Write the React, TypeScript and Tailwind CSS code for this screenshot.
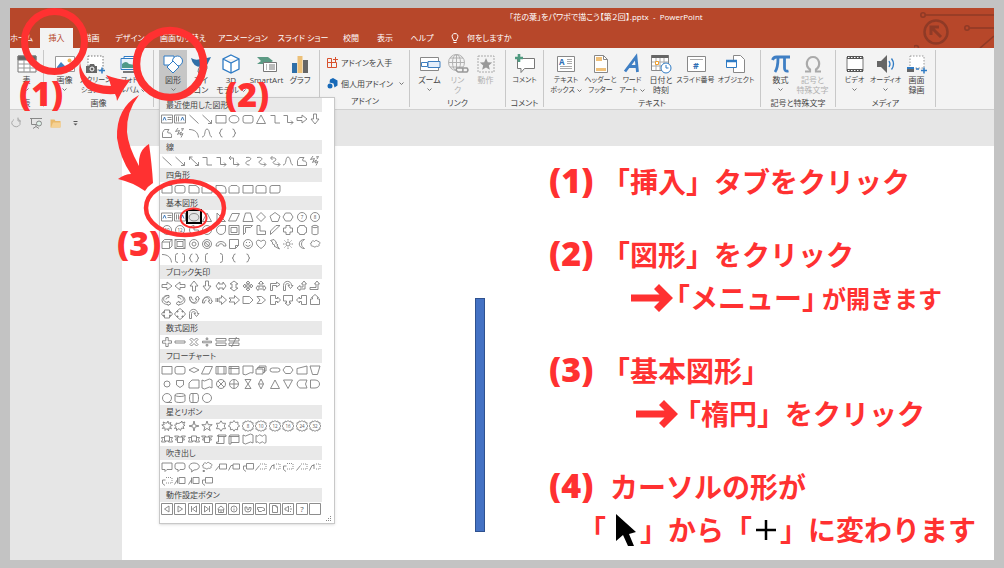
import type { ReactNode } from "react";
import clsx from "clsx";

type Glyph = { d: string; t?: string; blue?: string };

const BOX = "M1 2.5h10v7.5h-10z";
const ROUND = "M3 2.5h6q2 0 2 2v3.500q0 2-2 2h-6q-2 0-2-2v-3.500q0-2 2-2z";
const CIRCLE = "M6 1.500a4.500 4.500 0 1 1 0 9a4.500 4.500 0 1 1 0-9z";
const GEAR =
  "M6 .5l1.200 1.300 1.600-.8.5 1.700 1.800.1-.3 1.700 1.200 1.500-1.200 1.500.3 1.700-1.800.1-.5 1.700-1.600-.8-1.200 1.300-1.200-1.300-1.600.8-.5-1.700-1.800-.1.3-1.700-1.200-1.500 1.200-1.500-.3-1.700 1.800-.1.5-1.700 1.600.8z";
const FRAME = "M.5 .5h11v11h-11z";

const glyphs: Record<string, Glyph> = {
  textH: { d: "M.5 2h11v8h-11zM6.500 4.500h4M6.500 6.500h4", blue: "M2 7.500l1.500-3.500 1.500 3.500" },
  textV: { d: "M.5 2h11v8h-11zM2.500 3.500v5M4.500 3.500v5", blue: "M7 7.500l1.500-3.500 1.500 3.500" },
  line: { d: "M1.500 2l9 8.500" },
  arrowLine: { d: "M1.500 2l9 8.500M10.500 7v3.500h-3.500" },
  doubleLine: { d: "M1.500 2l9 8.500M10.500 7v3.500h-3.500M1.500 5v-3h3" },
  rect: { d: BOX },
  oval: { d: "M6 2.500c6.500 0 6.500 7.500 0 7.500s-6.500-7.500 0-7.500z" },
  round: { d: ROUND },
  tri: { d: "M6 2l4.500 8.500h-9z" },
  elbow: { d: "M1.500 2.500h4.500v7.500h5" },
  elbowArrow: { d: "M1.500 2.500h4v7h5.500M9 7.500l2 2-2 2" },
  elbowDouble: { d: "M1.500 3h4v6.500h5.500M9 7.500l2 2-2 2M3 1l-2 2 2 2" },
  curve: { d: "M4 2.500c7-1 5 3 2 3.500s-3 4 1.500 4" },
  curveArrow: { d: "M2 2.500c7-1 5 3 3 3.500s-1 4 5.500 3.500M9 7.500l2 2-2 2" },
  curveDouble: { d: "M2 3c7-1 5 3 3 3.500s-1 3.500 5.500 3M9 7.500l2 2-2 2M3.500 1l-2 2 2 2" },
  arrowR: { d: "M1 4.500h5v-2.500l5 4-5 4v-2.500h-5z" },
  arrowL: { d: "M11 4.500h-5v-2.500l-5 4 5 4v-2.500h5z" },
  arrowU: { d: "M4.500 11v-5h-2.500l4-5 4 5h-2.500v5z" },
  arrowD: { d: "M4.500 1v5h-2.500l4 5 4-5h-2.500v-5z" },
  free: { d: "M1.500 10.500v-5l2-3h4.500q-3 3.500 0 3.500 3-.5 2.500 4.500z" },
  scribble: { d: "M4 1l-2.500 3.500 4-1-2 4 4-2.500-1.500 3 3-1.500-2 4M7 2l2.500-.5-1.500 2.500" },
  arc: { d: "M1 2.500c6 0 9 3 9.500 8" },
  wave: { d: "M1 10c4 0 2-8 5-8s2 8 5 8" },
  braceL: { d: "M7.500 2q-2 0-2 2t-1.500 2q1.500 0 1.500 2t2 2" },
  braceR: { d: "M4.500 2q2 0 2 2t1.500 2q-1.500 0-1.500 2t-2 2" },
  braces: { d: "M4.500 2q-2 0-2 2t-1.500 2q1.500 0 1.500 2t2 2M7.500 2q2 0 2 2t1.500 2q-1.500 0-1.500 2t-2 2" },
  brackets: { d: "M4 1.500q-2.500 0-2.500 2v5q0 2 2.500 2M8 1.500q2.500 0 2.500 2v5q0 2-2.500 2" },
  brackL: { d: "M7 1.500q-2.500 0-2.500 2v5q0 2 2.500 2" },
  brackR: { d: "M5 1.500q2.500 0 2.500 2v5q0 2-2.500 2" },
  snip: { d: "M1 2.500h7l3 2.500v5h-10z" },
  snip2: { d: "M3 2.500h6l2 2v5.500h-10v-5.500z" },
  roundOne: { d: "M1 2.500h6q4 0 4 4v3.500h-10z" },
  roundTop: { d: "M3 2.500h6q2 0 2 2v5.500h-10v-5.500q0-2 2-2z" },
  roundD: { d: "M3 2.500h8v5.500q0 2-2 2h-8v-5.500q0-2 2-2z" },
  rightTri: { d: "M2 2v8.500h8.500z" },
  para: { d: "M4 2.500h7.500l-3.500 7.500h-7.500z" },
  trap: { d: "M3.500 2h5l2.500 8.500h-10z" },
  diamond: { d: "M6 1.500l4.500 4.500-4.500 4.500-4.500-4.500z" },
  penta: { d: "M6 1.500l5 3.700-2 5.300h-6l-2-5.300z" },
  hexa: { d: "M3.500 2h5l2.500 4-2.500 4h-5l-2.500-4z" },
  circ: { d: CIRCLE },
  c7: { d: CIRCLE, t: "7" },
  c8: { d: CIRCLE, t: "8" },
  c10: { d: CIRCLE, t: "10" },
  c12: { d: CIRCLE, t: "12" },
  pie: { d: "M6 1.500v4.500h4.500a4.500 4.500 0 1 1-4.500-4.500z" },
  tear: { d: "M6 1.500h4.500v4.500a4.500 4.500 0 1 1-4.500-4.500z" },
  frame: { d: "M1 1.500h10v9h-10zM3 3.500h6v5h-6z" },
  halfFrame: { d: "M1.500 1.500h9l-2 2h-5v5l-2 2z" },
  ell: { d: "M2 1.500h3v5.500h5.500v3.500h-8.500z" },
  stripe: { d: "M1.500 7l5.500-5.500h4l-9.500 9z" },
  cross: { d: "M4 1.500h4v2.500h2.500v4h-2.500v2.500h-4v-2.500h-2.500v-4h2.500z" },
  plus: { d: "M4.800 1.500h2.400v3.300h3.300v2.400h-3.300v3.300h-2.400v-3.300h-3.300v-2.400h3.300z" },
  plaque: { d: "M3.500 1.500h5q0 2 2 2v5q-2 0-2 2h-5q0-2-2-2v-5q2 0 2-2z" },
  can: { d: "M3 2.500c0-1.500 6-1.500 6 0v7c0 1.500-6 1.500-6 0zM3 2.500c0 1.500 6 1.500 6 0" },
  cube: { d: "M1 4l2.500-2.500h7.500v6.500l-2.500 2.500h-7.500zM1 4h7.500v6.500M8.500 4l2.500-2.500" },
  bevel: { d: "M1 1.500h10v9h-10zM3 3.500h6v5h-6zM1 1.500l2 2M11 1.500l-2 2M1 10.500l2-2M11 10.500l-2-2" },
  donut: { d: CIRCLE + "M6 4a2 2 0 1 1 0 4a2 2 0 1 1 0-4z" },
  no: { d: CIRCLE + "M6 3.500a2.500 2.500 0 1 1 0 5a2.500 2.500 0 1 1 0-5zM3.500 4l5 4.500" },
  blockArc: { d: "M1 8c0-6 10-6 10 0h-2.500c0-3-5-3-5 0z" },
  fold: { d: "M1.500 1.500h9v6l-3 3h-6zM10.500 7.500h-3v3" },
  smile: { d: CIRCLE + "M3.500 7q2.500 3 5 0M4.500 4v1M7.500 4v1" },
  heart: { d: "M6 10.500c-8-5-4-11 0-7 4-4 8 2 0 7z" },
  bolt: { d: "M1.500 2.500l3.500-1 2.500 3-1 .5 2.500 2-1 .5 2.500 3.500-5.500-3 1-.7-3-1.800 1-.7z" },
  sun: { d: "M6 4a2 2 0 1 1 0 4a2 2 0 1 1 0-4zM6 1v1.500M6 9.500v1.500M1 6h1.500M9.500 6h1.500M2.500 2.500l1 1M8.500 8.500l1 1M9.500 2.500l-1 1M3.500 8.500l-1 1" },
  moon: { d: "M8.500 1.500c-7 0-7 9 0 9c-4-2-4-7 0-9z" },
  cloud: { d: "M2.500 5c-.5-2 2-2.800 3-1.500.8-1.600 3-1.400 3.300 0 2.200-.3 2.700 2 1.200 2.700.8 1.800-1.300 2.800-2.500 1.800-.8 1.500-2.800 1.300-3.300 0-1.500.6-2.700-.6-2-1.500-1.200-.3-1-1.500.3-1.500z" },
  leftRight: { d: "M1 6l3-4v2h4v-2l3 4-3 4v-2h-4v2z" },
  upDown: { d: "M6 1l4 3h-2v4h2l-4 3-4-3h2v-4h-2z" },
  quad: { d: "M6 1l2 2h-1.300v2.300h2.300v-1.300l2 2-2 2v-1.300h-2.300v2.300h1.300l-2 2-2-2h1.300v-2.300h-2.300v1.300l-2-2 2-2v1.300h2.300v-2.300h-1.300z" },
  triple: { d: "M6 1l2.500 2.500h-1.500v3.500h2v-1.500l2 2.500-2 2.500v-1.500h-6v1.500l-2-2.500 2-2.500v1.500h2v-3.500h-1.500z" },
  bent: { d: "M1.500 10.500v-7h6v-1.500l3.500 2.500-3.500 2.500v-1.500h-4v5z" },
  uturn: { d: "M1.500 10.500v-5c0-5.500 8-5.500 8 0h1.500l-2.500 3-2.500-3h1.500c0-2.500-4-2.500-4 0v5z" },
  bentUp: { d: "M1 8l3-2.500v1.500h3v-3h-1.500l2.500-3 2.500 3h-1.500v5h-5v1.500z" },
  bentUp2: { d: "M1 7.500h6v-3.500h-1.500l2.500-3 2.500 3h-1.500v5.500h-8z" },
  curvR: { d: "M8 1.500c-7 0-7 7-1 7v-1.500l3 2.500-3 2v-1c-9 0-7-10 1-9zM8 1.500v2c-2 0-3 1-3 2" },
  curvL: { d: "M4 1.500c7 0 7 7 1 7v-1.500l-3 2.500 3 2v-1c9 0 7-10-1-9zM4 1.500v2c2 0 3 1 3 2" },
  curvU: { d: "M1.500 3c0 7 7 7 7 2h-1.500l2.500-3 2 3h-1c0 6-9 6-9-2zM1.500 3h2c0 2 1 3 2 3" },
  curvD: { d: "M1.500 9c0-7 7-7 7-2h-1.500l2.500 3 2-3h-1c0-6-9-6-9 2zM1.500 9h2c0-2 1-3 2-3" },
  striped: { d: "M1 4v4M2.500 4v4M4 4h2.500v-2.500l5 4.500-5 4.500v-2.500h-2.500z" },
  notched: { d: "M1 4h5.500v-2.500l5 4.500-5 4.500v-2.500h-5.500l2-2z" },
  home: { d: "M1 2.500h6.500l3.500 3.500-3.500 3.500h-6.500z" },
  chevron: { d: "M2 2.500h4.500l4 3.500-4 3.500h-4.500l3-3.500z" },
  callR: { d: "M1.500 1.500h5v3h2v-1.500l3 3-3 3v-1.500h-2v3h-5z" },
  callD: { d: "M1.500 1.500h9v5.500h-3v2h1.500l-3 2.500-3-2.500h1.500v-2h-3z" },
  callL: { d: "M10.500 1.500h-5v3h-2v-1.500l-3 3 3 3v-1.500h2v3h5z" },
  callU: { d: "M1.500 10.500h9v-5.500h-2v-1.500h1l-3.500-3-3.500 3h1v1.500h-2z" },
  callLR: { d: "M3.500 2h5v3h1v-1.500l2 2.500-2 2.500v-1.500h-1v3h-5v-3h-1v1.500l-2-2.500 2-2.500v1.500h1z" },
  callQ: { d: "M4 4v-1h-1l3-2.500 3 2.500h-1v1h1v-1l2.500 3-2.500 3v-1h-1v1h1l-3 2.500-3-2.500h1v-1h-1v1l-2.500-3 2.500-3v1z" },
  minus: { d: "M1 5h10v2h-10z" },
  times: { d: "M3.500 2l2.500 2.500 2.500-2.500 1.500 1.500-2.500 2.500 2.500 2.500-1.500 1.500-2.500-2.500-2.500 2.500-1.500-1.500 2.500-2.500-2.500-2.500z" },
  div: { d: "M1.500 5.200h9v1.600h-9zM5.200 2h1.600v1.600h-1.600zM5.200 8.400h1.600v1.600h-1.600z" },
  eq: { d: "M1 2.500h10v2.500h-10zM1 7h10v2.500h-10z" },
  neq: { d: "M1 2.500h10v2.500h-10zM1 7h10v2.500h-10zM8.500 1l-5 10" },
  flatDia: { d: "M6 3.500l5 2.500-5 2.500-5-2.500z" },
  predef: { d: BOX + "M3 2.500v7.500M9 2.500v7.500" },
  internal: { d: BOX + "M3 2.500v7.500M1 4.500h10" },
  doc: { d: "M1 2h10v7q-3-1-5 .8t-5 .4z" },
  docs: { d: "M1 5h7v5h-7zM2.500 5v-1.500h7v5h-1.500M4 3.500v-1.500h7v5h-1.500" },
  term: { d: "M3.500 4h5q2.500 0 2.500 2t-2.500 2h-5q-2.500 0-2.500-2t2.500-2z" },
  prep: { d: "M3.500 2.500h5l2.500 3.500-2.500 3.500h-5l-2.500-3.500z" },
  manual: { d: "M1 4.500l10-2.500v8h-10z" },
  manOp: { d: "M1 2h10l-2.500 8.500h-5z" },
  dot: { d: "M6 3a3 3 0 1 1 0 6a3 3 0 1 1 0-6z" },
  offpage: { d: "M2.500 2.500h7v4.500l-3.500 2.500-3.500-2.500z" },
  card: { d: "M4 2h7v8h-10v-5z" },
  tape: { d: "M1 2q2.500 2 5 0t5 0v8q-2.500-2-5 0t-5 0z" },
  sumX: { d: CIRCLE + "M3 3l6 6M9 3l-6 6" },
  orX: { d: CIRCLE + "M6 1.500v9M1.500 6h9" },
  collate: { d: "M3 1.500h6l-6 9h6z" },
  sort: { d: "M6 1l2.500 5-2.500 5-2.500-5zM3.500 6h5" },
  merge: { d: "M1.500 2h9l-4.500 8.500z" },
  stored: { d: "M3.500 2h7.500q-3 4 0 8h-7.500q-5-4 0-8z" },
  delay: { d: "M1.500 2h4.500c6 0 6 8 0 8h-4.500z" },
  seq: { d: CIRCLE + "M6 10.500h5" },
  disk: { d: "M1 3c0-2 10-2 10 0v6c0 2-10 2-10 0zM1 3c0 2 10 2 10 0" },
  drum: { d: "M3 1.500h6c2 0 2 9 0 9h-6c-2 0-2-9 0-9zM5 1.500v9" },
  burst: { d: "M6 3l1-2 .5 2.500 2.500-1-1 2 2.500.8-2.500 1 1.500 2.500-2.500-1-.5 3-1.500-2.300-2 2v-2.700l-2.700.7 1.500-2-2-1.500 2.500-.5-1.300-2.500 2.700 1z" },
  burst2: { d: "M6 3l2-2v2l3-1-1.500 2.500 1.500.7-2 1.300 1 2-2.500-.5-1 2.500-1.500-2-2.500 2v-2.500l-2 .5 1.500-2-1.500-1.300 2-.7-.5-1.500 2 .5z" },
  star4: { d: "M6 1l1 4 4 1-4 1-1 4-1-4-4-1 4-1z" },
  star5: { d: "M6 1l1.300 3.700h3.900l-3.100 2.300 1.100 3.700-3.200-2.300-3.200 2.300 1.100-3.700-3.100-2.300h3.900z" },
  star6: { d: "M6 .8l1.600 2.500h3l-1.400 2.700 1.400 2.700h-3l-1.600 2.500-1.600-2.500h-3l1.400-2.700-1.400-2.700h3z" },
  star7: { d: "M6 .5l1.400 2 2.600-.4-.2 2.400 1.900 1.500-2.200 1.300.1 2.500-2.400-.5-1.200 1.900-1.200-1.900-2.400.5.1-2.500-2.200-1.300 1.900-1.500-.2-2.400 2.600.4z" },
  g8: { d: GEAR, t: "8" },
  g10: { d: GEAR, t: "10" },
  g12: { d: GEAR, t: "12" },
  g16: { d: GEAR, t: "16" },
  g24: { d: GEAR, t: "24" },
  g32: { d: GEAR, t: "32" },
  ribbonU: { d: "M3.500 3h5v5h-5zM3.500 4.500h-3l1 2-1 2.500h4v-1M8.500 4.500h3l-1 2 1 2.500h-4v-1" },
  ribbonD: { d: "M3.500 4h5v5.500h-5zM3.500 7h-2l1-2-2-2h4v1M8.500 7h2l-1-2 2-2h-4v1" },
  scrollV: { d: "M3 2h8v1.500h-2v7h-7.500v-1.500h2v-7M3 2q-1.500 1.500.5 1.500h5.500" },
  scrollH: { d: "M1 3.500h10v6h-8v1.500h-2zM1 3.500l1-1.500h9v1.500M3 9.500v-6" },
  dwave: { d: "M1 2.500q1.300 1.500 2.500 0t2.500 0 2.500 0 2.500 0v7q-1.300 1.500-2.500 0t-2.500 0-2.500 0-2.500 0z" },
  sayRect: { d: "M1 2h10v6.500h-5l-2 2v-2h-3z" },
  sayRound: { d: "M3 2h6q2 0 2 2v2.500q0 2-2 2h-3l-2 2v-2h-1q-2 0-2-2v-2.500q0-2 2-2z" },
  sayOval: { d: "M4 9c-5-2-3-7 2-7 7 0 7 7 0 7l-2.500 2z" },
  sayCloud: { d: "M2.500 4c-.5-2 2-2.800 3-1.500.8-1.600 3-1.400 3.300 0 2.200-.3 2.700 2 1.200 2.700.8 1.800-1.300 2.800-2.500 1.800-.8 1.500-2.800 1.300-3.300 0-1.500.6-2.700-.6-2-1.500-1.200-.3-1-1.500.3-1.500zM2 9.500h1.500v1h-1.500z" },
  co1: { d: "M4.500 3h7v5h-7zM.5 9.500l4-5" },
  co2: { d: "M5 3h6.500v5h-6.500zM.5 9.500l2.500-5h2" },
  co3: { d: "M4.500 2.500h7v5.500h-7zM4.500 5h-3v3.500l2.500 2" },
  co4: { d: "M.5 9.500l4-5M5 3h1M7 3h1M9 3h1M11 3v1M11 5v1M11 7v1M9 8h1M7 8h1M5 8h1" },
  co5: { d: "M.5 9.500l2.500-5h2M5 3v5M7 3h1M9 3h1M11 3v1M11 5v1M11 7v1M9 8h1M7 8h1" },
  co6: { d: "M4.500 5h-3v3.500l2.500 2M5 2.500h1M7 2.500h1M9 2.500h1M11 3v1M11 5v1M11 7v1M9 8h1M7 8h1M5 8h1" },
  co7: { d: "M5 2.500h6v6h-6zM.5 9.500l3-5M3.500 2.500v6" },
  btnPrev: { d: FRAME + "M8 3v6l-4.500-3z" },
  btnNext: { d: FRAME + "M4 3v6l4.500-3z" },
  btnFirst: { d: FRAME + "M8.500 3v6l-4-3zM3.500 3v6" },
  btnLast: { d: FRAME + "M3.500 3v6l4-3zM8.500 3v6" },
  btnHome: { d: FRAME + "M2.500 6l3.500-3 3.500 3M3.500 6v3.500h5v-3.500M6 9.500v-2M4 7h4" },
  btnInfo: { d: FRAME + "M6 3a3 3 0 1 1 0 6a3 3 0 1 1 0-6zM6 5.500v2M6 4.200v.4" },
  btnBack: { d: FRAME + "M3 4v3q0 2 3 2t3-3v-1.500h-2v2q-2 1-2-1v-1.500z" },
  btnMovie: { d: FRAME + "M2.500 4.500h5l2 1v2h-2l-1 1h-3v-2h-1z" },
  btnDoc: { d: FRAME + "M3.500 2.500h3.500l1.500 1.500v5.500h-5zM7 2.500v1.500h1.500" },
  btnSound: { d: FRAME + "M3 5h1.500l2-2v6l-2-2h-1.500zM8 6h2M8 4l1-1M8 8l1 1" },
  btnHelp: { d: FRAME, t: "?" },
  btnBlank: { d: FRAME },
};

const sections = [
  {
    title: "最近使用した図形",
    rows: [
      "textH textV line arrowLine rect oval round tri elbow elbowArrow arrowR arrowD",
      "free scribble arc wave braceL braceR",
    ],
  },
  {
    title: "線",
    rows: ["line arrowLine doubleLine elbow elbowArrow elbowDouble curve curveArrow curveDouble wave free scribble"],
  },
  { title: "四角形", rows: ["rect round snip snip2 roundOne snip2 rect roundTop roundD"] },
  {
    title: "基本図形",
    rows: [
      "textH textV oval tri rightTri para trap diamond penta hexa c7 c8",
      "c10 c12 pie circ tear frame halfFrame ell stripe cross plaque can",
      "cube bevel donut no blockArc fold smile heart bolt sun moon cloud",
      "arc brackets braces brackL brackR braceL braceR",
    ],
  },
  {
    title: "ブロック矢印",
    rows: [
      "arrowR arrowL arrowU arrowD leftRight upDown quad triple bent uturn bentUp bentUp2",
      "curvR curvL curvU curvD striped notched home chevron callR callD callL callU",
      "callLR callQ uturn",
    ],
  },
  { title: "数式図形", rows: ["plus minus times div eq neq"] },
  {
    title: "フローチャート",
    rows: [
      "rect round flatDia para predef internal doc docs term prep manual manOp",
      "dot offpage card tape sumX orX collate sort tri merge stored delay",
      "seq disk drum circ",
    ],
  },
  {
    title: "星とリボン",
    rows: [
      "burst burst2 star4 star5 star6 star7 g8 g10 g12 g16 g24 g32",
      "ribbonU ribbonD ribbonU ribbonD scrollV scrollH tape dwave",
    ],
  },
  {
    title: "吹き出し",
    rows: [
      "sayRect sayRound sayOval sayCloud co1 co2 co3 co4 co5 co6 co4 co5",
      "co6 co7 co7 co3",
    ],
  },
  {
    title: "動作設定ボタン",
    rows: ["btnPrev btnNext btnFirst btnLast btnHome btnInfo btnBack btnMovie btnDoc btnSound btnHelp btnBlank"],
  },
];

const ShapeIcon = ({ name }: { name: string }) => {
  const { d, t, blue } = glyphs[name];
  return (
    <svg viewBox="0 0 12 12" className="h-3 w-3" fill="none" stroke="#808080" strokeWidth="0.9">
      <path d={d} />
      {blue && <path d={blue} stroke="#2f6fb5" />}
      {t && (
        <text x="6" y={t === "?" ? 9 : 7.6} textAnchor="middle" fontSize={t === "?" ? 8 : 4.5} fill="#555" stroke="none">
          {t}
        </text>
      )}
    </svg>
  );
};

const ShapesMenu = () => (
  <div className="absolute left-[149px] top-[89px] flex h-[427px] w-[176px] flex-col border border-[#c8c8c8] bg-white pb-[7px] shadow-sm">
    {sections.map((section) => (
      <section key={section.title} className="contents">
        <h3 className="h-[14px] w-[162px] shrink-0 bg-[#e9e9e9] pl-[6px] text-[8px] leading-[14px] text-[#444]">
          {section.title}
        </h3>
        {section.rows.map((row, i) => (
          <div key={i} className="grid w-[162px] flex-1 grid-cols-12 items-center">
            {row.split(" ").map((name, j) => (
              <button
                key={j}
                type="button"
                aria-label={name}
                className={clsx(
                  "flex h-[13px] items-center justify-center",
                  section.title === "基本図形" && name === "oval" && "bg-[#e4e4e4] outline-2 -outline-offset-1 outline-black"
                )}
              >
                <ShapeIcon name={name} />
              </button>
            ))}
          </div>
        ))}
      </section>
    ))}
    <svg viewBox="0 0 6 6" className="absolute bottom-px right-[2px] h-[6px] w-[6px]" fill="#888">
      <path d="M4 0h1v1h-1zM4 4h1v1h-1zM2 4h1v1h-1zM0 4h1v1h-1zM2 2h1v1h-1zM4 2h1v1h-1z" />
    </svg>
  </div>
);

const Svg = ({ children }: { children: ReactNode }) => (
  <svg viewBox="0 0 22 22" className="h-[22px] w-[22px] shrink-0" fill="none" stroke="#777" strokeWidth="1">
    {children}
  </svg>
);

const icons: Record<string, ReactNode> = {
  table: (
    <Svg>
      <path d="M2 3h18v16H2z" fill="#fff" />
      <path d="M2 3h18v4H2z" fill="#666" />
      <path d="M2 11h18M2 15h18M8 7v12M14 7v12" stroke="#999" />
    </Svg>
  ),
  picture: (
    <Svg>
      <path d="M1.500 3.500h19v15h-19z" fill="#fff" stroke="#999" />
      <path d="M3 17v-3l4-5 5 5 3-2 4 4v1z" fill="#3f7fbf" stroke="none" />
      <circle cx="15.500" cy="7.500" r="2" fill="#f0b75a" stroke="none" />
    </Svg>
  ),
  screenshot: (
    <Svg>
      <path d="M3 3h15v14H3z" strokeDasharray="1.500 1.500" fill="#fff" />
      <path d="M1 13h3l1-2h4l1 2h2v7H1z" fill="#666" stroke="none" />
      <circle cx="7" cy="16" r="2" stroke="#fff" />
      <path d="M14 17.500h6M17 14.500v6" stroke="#2f7bc4" strokeWidth="1.500" />
    </Svg>
  ),
  album: (
    <Svg>
      <path d="M5 3.500h15v10H5z" fill="#fff" stroke="#2f7bc4" />
      <path d="M2 5.500h15v11H2z" fill="#e8f3fb" stroke="#2f7bc4" />
      <path d="M3 14v-3q4-4 7 0l6 1v3H3z" fill="#4f9a88" stroke="none" />
      <path d="M4 19h12" strokeWidth="2" />
    </Svg>
  ),
  shapes: (
    <Svg>
      <path d="M2 3h10v9H2z" fill="#fff" stroke="#2f7bc4" />
      <circle cx="15.500" cy="8" r="5" fill="#fff" stroke="#2f7bc4" />
      <path d="M11 8l6 6-6 6-6-6z" fill="#fff" stroke="#2f7bc4" />
    </Svg>
  ),
  icon: (
    <Svg>
      <path d="M1 5q5 3 9 1l3-2 4 1 4-1-2 4q-2 6-8 6-8 0-10-9z" fill="#2f6fa8" stroke="none" />
      <path d="M8 19q0-7 8-8 3 5-2 8zM8 20l5-5" fill="#ddd" />
    </Svg>
  ),
  cube: (
    <Svg>
      <path d="M11 2l8 4v10l-8 4-8-4V6zM3 6l8 4 8-4M11 10v10" fill="#fff" stroke="#2f7bc4" strokeWidth="1.300" />
    </Svg>
  ),
  smart: (
    <Svg>
      <path d="M1 4h11l5 4-5 3H1l4-3z" fill="#5c9a84" stroke="none" />
      <path d="M7.500 9.500h13v9h-13z" fill="#fff" />
      <path d="M10 12h1M10 14h1M10 16h1M13 12h6M13 14h6M13 16h6" />
    </Svg>
  ),
  chart: (
    <Svg>
      <path d="M3 10h5v10H3z" fill="#2f6fa8" stroke="none" />
      <path d="M8.500 3h5v17h-5z" fill="#ecc078" stroke="none" />
      <path d="M14 7h5v13h-5z" fill="#666" stroke="none" />
    </Svg>
  ),
  zoom: (
    <Svg>
      <path d="M1.500 4.500h18v13h-18z" fill="#fff" stroke="#888" />
      <path d="M2.500 9.500h6v4h-6z" stroke="#3f7fbf" />
      <path d="M9 8.500h12v6H9z" fill="#e6effa" stroke="#3f7fbf" />
    </Svg>
  ),
  link: (
    <Svg>
      <circle cx="9.500" cy="9.500" r="8" stroke="#b0b0b0" />
      <path d="M1.500 9.500h16M9.500 1.500v16M3 5h13M3 14h13" stroke="#b0b0b0" />
      <ellipse cx="9.500" cy="9.500" rx="4" ry="8" stroke="#b0b0b0" />
      <path d="M10 15h5q2 2 0 4h-4q-3-2-1-4zM16 15h4q2 2 0 4h-5" stroke="#999" strokeWidth="1.500" fill="#f3f3f3" />
    </Svg>
  ),
  action: (
    <Svg>
      <path d="M3 3h16v16H3z" strokeDasharray="2 1" stroke="#aaa" />
      <path d="M11 5l1.800 4.200 4.400.3-3.400 2.900 1.100 4.400-3.900-2.400-3.900 2.400 1.100-4.400-3.400-2.900 4.400-.3z" fill="#999" stroke="none" />
    </Svg>
  ),
  comment: (
    <Svg>
      <path d="M3.500 5.500h17v10h-10l-3.500 4v-4H3.500z" fill="#fff" />
      <path d="M5 1v8M1 5h8" stroke="#4f9a80" strokeWidth="2.600" />
    </Svg>
  ),
  textbox: (
    <Svg>
      <path d="M2.500 3.500h17v15h-17z" fill="#fff" stroke="#888" />
      <text x="4" y="12" fontSize="8" fontWeight="700" fill="#2f6fb5" stroke="none">A</text>
      <path d="M12 6.500h5M12 8.500h5M12 10.500h5M5 13.500h12M5 15.500h12" stroke="#aaa" />
    </Svg>
  ),
  header: (
    <Svg>
      <path d="M4.500 2.500h9l4 4v13h-13z" fill="#fff" stroke="#888" />
      <path d="M6 4h6v4H6zM6 15h10v3H6z" fill="#f0c078" stroke="none" />
      <path d="M13.500 2.500v4h4" stroke="#888" />
    </Svg>
  ),
  wordart: (
    <Svg>
      <path d="M4 18.500L15 4l1.500 15M8 13.500h8" stroke="#3f7fc4" strokeWidth="2.800" />
    </Svg>
  ),
  date: (
    <Svg>
      <path d="M1.500 2.500h17v15h-17z" fill="#fff" stroke="#888" />
      <path d="M1.500 3.500h17" strokeWidth="3" stroke="#666" />
      <path d="M2 9h16M2 13h16M6 5v12M10 5v12M14 5v12" stroke="#aaa" />
      <path d="M5.500 8.500h3v3h-3z" fill="#fff" stroke="#f0a030" />
      <circle cx="16" cy="15" r="5" fill="#fff" stroke="#2f7bc4" />
      <path d="M16 12v3h2.500" stroke="#2f7bc4" />
    </Svg>
  ),
  number: (
    <Svg>
      <path d="M2.500 3.500h18v15h-18z" fill="#fff" stroke="#888" />
      <path d="M5 6.500h13" stroke="#aaa" />
      <text x="8" y="16" fontSize="9" fontWeight="700" fill="#2f6fb5" stroke="none">#</text>
    </Svg>
  ),
  object: (
    <Svg>
      <path d="M8.500 2.500h7l4 4v13h-11z" fill="#fff" stroke="#888" />
      <path d="M1.500 7.500h10v7h-10z" fill="#fff" stroke="#2f7bc4" />
      <path d="M1 8h11" stroke="#2f7bc4" strokeWidth="2.500" />
    </Svg>
  ),
  pi: (
    <Svg>
      <path d="M2.500 7q1-3 4-3H20M8 5q0 10-3 14M14.500 5v10q0 4 4 3" stroke="#3f7fc4" strokeWidth="2.800" />
    </Svg>
  ),
  omega: (
    <Svg>
      <path d="M3 18.500h5v-2q-4-3-3-7.500 1.500-5 6-5t6 5q1 4.500-3 7.500v2h5" stroke="#aaa" strokeWidth="2.200" />
    </Svg>
  ),
  video: (
    <Svg>
      <path d="M3 4h16v14H3z" fill="#fff" />
      <path d="M3 4.500h16M3 17.500h16" stroke="#555" strokeWidth="3" />
      <path d="M4 4.500h15M4 17.500h15" stroke="#fff" strokeDasharray="1.500 1.500" />
    </Svg>
  ),
  audio: (
    <Svg>
      <path d="M2 8h4l6-6v18l-6-6H2z" fill="#666" stroke="none" />
      <path d="M14 8q2 3 0 6M16.500 5.500q4 5.500 0 11" stroke="#2f7bc4" strokeWidth="1.300" />
    </Svg>
  ),
  record: (
    <Svg>
      <path d="M4 3h14v12H4z" strokeDasharray="1.500 1.500" fill="#fff" stroke="#999" />
      <path d="M1 14h7v5H1z" fill="#666" stroke="none" />
      <path d="M1 15h7" stroke="#2f7bc4" strokeWidth="2" />
      <path d="M10 16h3M15 17.500h6M18 14.500v6" stroke="#2f7bc4" strokeWidth="1.500" />
    </Svg>
  ),
};

type Item = {
  icon: string;
  lines: string[];
  w: string;
  drop?: boolean;
  active?: boolean;
  off?: boolean;
  small?: boolean;
};
type Group = { label: string; w: string; items: Item[] };

const mediaGroups: Group[] = [
  { label: "表", w: "w-[34px]", items: [{ icon: "table", lines: ["表"], w: "w-[28px]", drop: true }] },
  {
    label: "画像",
    w: "w-[110px]",
    items: [
      { icon: "picture", lines: ["画像"], w: "w-[28px]", drop: true },
      { icon: "screenshot", lines: ["スクリーン", "ショット ⌄"], w: "w-[34px]", small: true },
      { icon: "album", lines: ["フォト", "アルバム ⌄"], w: "w-[34px]", small: true },
    ],
  },
  {
    label: "図",
    w: "w-[166px]",
    items: [
      { icon: "shapes", lines: ["図形"], w: "w-[28px]", drop: true, active: true },
      { icon: "icon", lines: ["アイ", "コン"], w: "w-[28px]" },
      { icon: "cube", lines: ["3D", "モデル ⌄"], w: "w-[32px]" },
      { icon: "smart", lines: ["SmartArt"], w: "w-[39px]" },
      { icon: "chart", lines: ["グラフ"], w: "w-[28px]" },
    ],
  },
];

const insertGroups: Group[] = [
  {
    label: "リンク",
    w: "w-[96px]",
    items: [
      { icon: "zoom", lines: ["ズーム"], w: "w-[28px]", drop: true },
      { icon: "link", lines: ["リン", "ク"], w: "w-[28px]", off: true },
      { icon: "action", lines: ["動作"], w: "w-[28px]", off: true },
    ],
  },
  {
    label: "コメント",
    w: "w-[38px]",
    items: [{ icon: "comment", lines: ["コメント"], w: "w-[32px]", small: true }],
  },
  {
    label: "テキスト",
    w: "w-[217px]",
    items: [
      { icon: "textbox", lines: ["テキスト", "ボックス ⌄"], w: "w-[36px]", small: true },
      { icon: "header", lines: ["ヘッダーと", "フッター"], w: "w-[33px]", small: true },
      { icon: "wordart", lines: ["ワード", "アート ⌄"], w: "w-[30px]", small: true },
      { icon: "date", lines: ["日付と", "時刻"], w: "w-[28px]" },
      { icon: "number", lines: ["スライド番号"], w: "w-[41px]", small: true },
      { icon: "object", lines: ["オブジェクト"], w: "w-[40px]", small: true },
    ],
  },
  {
    label: "記号と特殊文字",
    w: "w-[75px]",
    items: [
      { icon: "pi", lines: ["数式"], w: "w-[29px]", drop: true },
      { icon: "omega", lines: ["記号と", "特殊文字"], w: "w-[35px]", off: true },
    ],
  },
  {
    label: "メディア",
    w: "w-[100px]",
    items: [
      { icon: "video", lines: ["ビデオ"], w: "w-[28px]", drop: true, small: true },
      { icon: "audio", lines: ["オーディオ"], w: "w-[34px]", drop: true, small: true },
      { icon: "record", lines: ["画面", "録画"], w: "w-[28px]" },
    ],
  },
];

const Chevron = () => (
  <svg viewBox="0 0 5 5" className="h-[5px] w-[5px]" fill="none" stroke="#777">
    <path d="M.5 1.500l2 2 2-2" />
  </svg>
);

const RibbonItem = ({ item }: { item: Item }) => (
  <button
    type="button"
    className={clsx(
      "flex h-[47px] shrink-0 flex-col items-center whitespace-nowrap pt-[3px] leading-[10px]",
      item.w,
      item.active && "bg-[#c6c6c6]",
      item.off && "text-[#b0b0b0]",
      item.small && "text-[7px]"
    )}
  >
    {icons[item.icon]}
    {item.lines.map((line) => (
      <span key={line} className="flex items-center gap-[2px]">
        {line.replace(" ⌄", "")}
        {line.endsWith("⌄") && <Chevron />}
      </span>
    ))}
    {item.drop && (
      <span className="pt-[2px]">
        <Chevron />
      </span>
    )}
  </button>
);

const RibbonGroup = ({ group }: { group: Group }) => (
  <div className={clsx("my-[2px] flex shrink-0 flex-col items-center border-r border-[#c8c8c8]", group.w)}>
    <div className="flex h-[48px]">
      {group.items.map((item) => (
        <RibbonItem key={item.icon} item={item} />
      ))}
    </div>
    <div className="leading-[12px]">{group.label}</div>
  </div>
);

const tabs = [
  { name: "ホーム", w: "w-[30px] pr-[7px]" },
  { name: "挿入", w: "w-[33px]", active: true },
  { name: "描画", w: "w-[37px]" },
  { name: "デザイン", w: "w-[40px]" },
  { name: "画面切り替え", w: "w-[66px]" },
  { name: "アニメーション", w: "w-[54px]" },
  { name: "スライド ショー", w: "w-[66px]" },
  { name: "校閲", w: "w-[30px]" },
  { name: "表示", w: "w-[38px]" },
  { name: "ヘルプ", w: "w-[36px]" },
];

const BigArrow = () => (
  <svg viewBox="0 0 42 28" className="h-7 w-[42px] shrink-0">
    <path d="M0 10.500h28.500l-5.500-5.500 5-5 14 14-14 14-5-5 5.500-5.500H0z" fill="#ff3131" />
  </svg>
);

const StepNumber = ({ n }: { n: number }) => (
  <span className="w-[54px] shrink-0 pl-px font-['Open_Sans'] text-[34px] font-extrabold leading-10">({n})</span>
);

const App = () => (
  <div
    lang="ja"
    className="relative min-h-screen bg-[#c3c3c3] px-[10px] py-2 font-['Open_Sans','Noto_Sans_CJK_JP',sans-serif] text-[8px] text-[#444]"
  >
    <div className="relative flex min-h-[552px] flex-col overflow-hidden bg-[#e6e6e6] [font-feature-settings:'palt']">
      <header className="relative bg-[#b7472a] text-white">
        <svg viewBox="0 0 80 40" className="absolute right-0 top-0 h-10 w-20" fill="none" stroke="#8f3a26" strokeWidth="1.600">
          <circle cx="9" cy="7" r="2.200" />
          <path d="M12 7h68" />
          <circle cx="22" cy="24" r="11.500" strokeWidth="2.500" />
          <path d="M27 29l-9-9M17 27v-8h8" strokeWidth="3" />
          <circle cx="53" cy="20" r="2.200" />
          <path d="M56 20h24M66 40l14-12" />
          <circle cx="2" cy="40" r="2.500" />
        </svg>
        <h1 className="h-5 pl-[208px] text-center text-[8px] leading-[18px]">
          「花の葉」をパワポで描こう【第２回】.pptx&nbsp; - &nbsp;PowerPoint
        </h1>
        <nav className="flex h-5 leading-5">
          {tabs.map((tab) => (
            <button
              key={tab.name}
              type="button"
              className={clsx(
                "shrink-0 whitespace-nowrap",
                tab.w,
                tab.active ? "bg-[#f3f3f3] text-[#b7472a]" : "text-white"
              )}
            >
              {tab.name}
            </button>
          ))}
          <label className="ml-[10px] flex items-center gap-[7px] whitespace-nowrap">
            <svg viewBox="0 0 10 12" className="h-3 w-[10px]" fill="none" stroke="#fff">
              <path d="M3.500 8.500q0-1.500-1-2.500-1.500-4 2.500-4.500 4 .5 2.500 4.500-1 1-1 2.500zM3.500 10.500h3" />
            </svg>
            <input
              defaultValue="何をしますか"
              className="w-16 bg-transparent text-[8px] text-white outline-none [font-feature-settings:'palt']"
            />
          </label>
        </nav>
      </header>

      <div className="flex h-[62px] border-b border-[#d0d0d0] bg-[#f3f3f3]">
        {mediaGroups.map((group) => (
          <RibbonGroup key={group.label} group={group} />
        ))}
        <div className="my-[2px] flex w-[90px] shrink-0 flex-col border-r border-[#c8c8c8] pl-[7px]">
          <button type="button" className="flex h-[27px] items-center gap-[3px] whitespace-nowrap">
            <svg viewBox="0 0 11 11" className="h-[11px] w-[11px]" fill="none" stroke="#d8512d">
              <path d="M.5 1.500h4v4h-4zM.5 5.500h4v5h-4zM4.500 5.500h5v5h-5zM8.500 0v5M6 2.500h5" />
            </svg>
            アドインを入手
          </button>
          <button type="button" className="flex h-[21px] items-center gap-[3px] whitespace-nowrap pb-[3px]">
            <svg viewBox="0 0 11 11" className="h-[11px] w-[11px]" fill="#1769b8">
              <path d="M6 0l4.500 2.500v5l-3 2-1-4-4-1 .5-3z" />
              <circle cx="3" cy="8" r="2.500" />
            </svg>
            個人用アドイン
            <span className="pl-[3px]">
              <Chevron />
            </span>
          </button>
          <div className="pr-[6px] text-center leading-[12px]">アドイン</div>
        </div>
        {insertGroups.map((group) => (
          <RibbonGroup key={group.label} group={group} />
        ))}
      </div>

      <div className="flex h-9 items-center gap-2 pb-[10px] text-[#888]">
        <svg viewBox="0 0 80 14" className="h-[14px] w-20" fill="none" stroke="#888">
          <path d="M4 3.500q-4 3-1 6 4 3 7-1 1-4-2-6M8 1.500v3.500h3" stroke="#aaa" />
          <path d="M20 2.500h12M21.500 2.500v6h9M26 8.500v2M23 12.500l3-2 3 2" />
          <circle cx="29" cy="7.500" r="2.500" fill="#dceee6" />
          <path d="M40.500 11.500v-8h4l1 1.500h5v6.500z" fill="#e9b96a" stroke="none" />
          <path d="M41 11.500l2-5h8l-1 5z" fill="#f5d193" stroke="none" />
          <path d="M63.500 5.500h4" stroke="#555" />
          <path d="M63.500 7.500h4l-2 2z" fill="#555" stroke="none" />
        </svg>
      </div>

      <main className="ml-[112px] flex flex-1 bg-white">
        <div className="ml-[353px] mt-[152px] h-[234px] w-[10px] shrink-0 border border-[#2f528f] bg-[#4472c4]" />
        <ol className="ml-[63px] flex flex-col gap-[30px] whitespace-nowrap pt-[14px] font-['Noto_Sans_CJK_JP',sans-serif] text-[28px] font-bold leading-[43px] text-[#ff3131] [font-feature-settings:normal]">
          <li className="flex">
            <StepNumber n={1} />
            「挿入」タブをクリック
          </li>
          <li>
            <div className="flex">
              <StepNumber n={2} />
              「図形」をクリック
            </div>
            <div className="flex items-center pl-[83px]">
              <BigArrow />
              <span className="-ml-[11px]">「メニュー」</span>
              <span className="-ml-2 text-[24px]">が開きます</span>
            </div>
          </li>
          <li>
            <div className="flex">
              <StepNumber n={3} />
              「基本図形」
            </div>
            <div className="flex items-center pl-[88px]">
              <BigArrow />
              <span className="-ml-[5px]">「楕円」をクリック</span>
            </div>
          </li>
          <li>
            <div className="flex">
              <StepNumber n={4} />
              <span className="pl-2">カーソルの形が</span>
            </div>
            <div className="flex items-center pl-[30px]">
              「
              <svg viewBox="0 0 34 32" className="h-8 w-[34px]">
                <path d="M10 0v27l7-6 5 11h6l-5-12 7-2z" fill="#000" />
              </svg>
              」から「
              <svg viewBox="0 0 28 28" className="h-7 w-7" stroke="#000" strokeWidth="2.500">
                <path d="M4 14h20M14 4v20" />
              </svg>
              」に変わります
            </div>
          </li>
        </ol>
      </main>

      <ShapesMenu />
    </div>

    {/* red pen marks laid over the ribbon and the menu */}
    <svg
      viewBox="0 0 340 270"
      className="pointer-events-none absolute left-0 top-0 h-[270px] w-[340px]"
      fill="none"
      stroke="#ff3131"
    >
      <circle cx="54.500" cy="41.500" r="30" strokeWidth="7" />
      <circle cx="170" cy="64" r="33.500" strokeWidth="7.500" />
      <ellipse cx="185" cy="208" rx="39" ry="27" strokeWidth="4.500" />
      <ellipse cx="193.500" cy="218" rx="13" ry="9.500" strokeWidth="2" />
      <g fill="#ff3131" stroke="none">
        <path d="M80 62Q81 72 88 79Q95 86 111 86Q110 80 106 75Q118 80 130 80Q122 90 117 101Q117 97 115 94Q96 95 87 88Q77 78 80 62z" />
        <path d="M139 95Q116 108 117 138Q120 158 131 174Q125 174 118 179Q132 182 145 191Q148 186 153 183Q152 165 149 144Q138 150 139 166Q128 146 127 132Q126 112 139 95z" />
      </g>
    </svg>
    <div className="pointer-events-none font-['Open_Sans'] text-[34px] font-extrabold leading-8 text-[#ff3131]">
      <span className="absolute left-[19px] top-[77px]">(1)</span>
      <span className="absolute left-[225px] top-[78px]">(2)</span>
      <span className="absolute left-[117px] top-[227px]">(3)</span>
    </div>
  </div>
);

export default App;
